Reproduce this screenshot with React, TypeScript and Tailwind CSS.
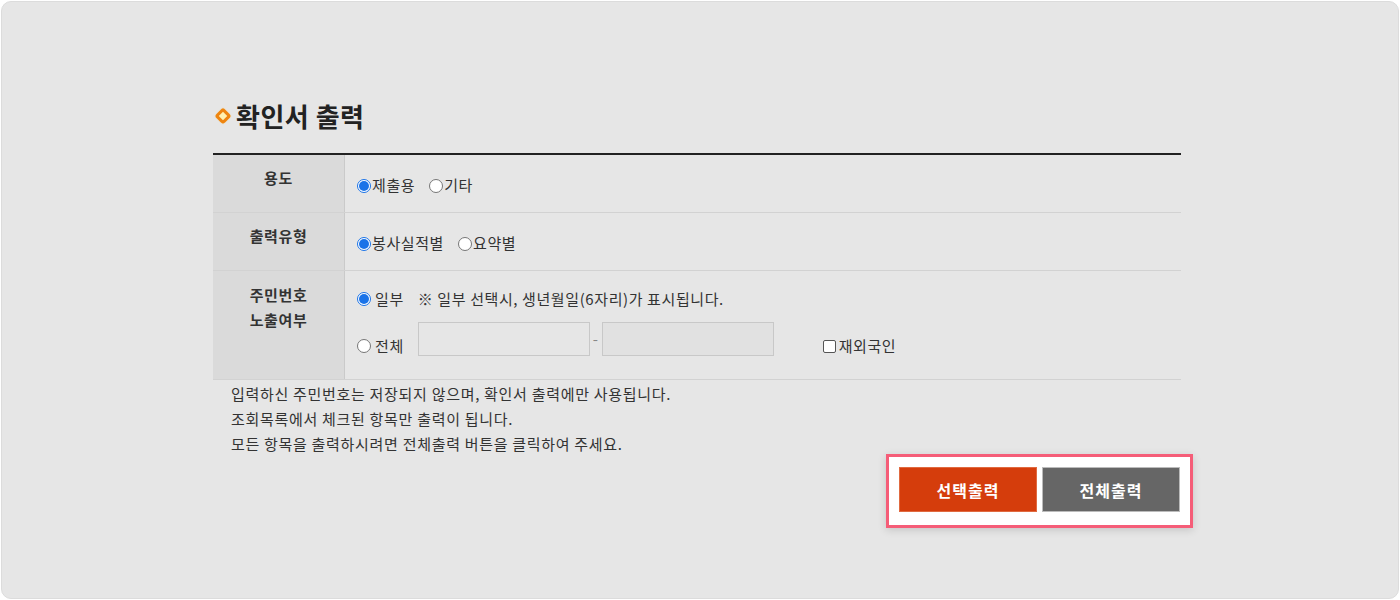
import React from 'react'

const font = { fontFamily: '"Noto Sans CJK KR", "Noto Sans", sans-serif' }

function Radio({ checked }: { checked?: boolean }) {
  return checked ? (
    <span className="inline-flex h-[14px] w-[14px] shrink-0 items-center justify-center rounded-full border border-[#1a73e8] bg-white">
      <span className="h-[10px] w-[10px] rounded-full bg-[#1a73e8]" />
    </span>
  ) : (
    <span className="inline-block h-[14px] w-[14px] shrink-0 rounded-full border border-[#767676] bg-white" />
  )
}

export default function App() {
  return (
    <div className="h-[600px] w-[1400px] bg-white p-px" style={font}>
      <div className="h-full w-full rounded-[10px] border border-[#dcdcdc] bg-[#e6e6e6] pl-[211px] pr-[217px] pt-[95px]">
        <h2 className="flex items-center gap-[7px] text-[26px] font-bold leading-[38px] tracking-[0.5px] text-[#222]">
          <span className="ml-[4px] inline-block h-[12px] w-[12px] rotate-45 rounded-[3px] border-[3px] border-[#ee8410] bg-[#fff0b0] shadow-[0_0_1px_#f5a623]" />
          확인서 출력
        </h2>

        <div className="mt-[18px] border-t-2 border-[#222] text-[15px] tracking-[0.6px] text-[#333]">
          <div className="flex h-[58px] border-b border-[#d2d2d2]">
            <div className="w-[132px] border-r border-[#cacaca] bg-[#dadada] pt-[12px] text-center font-bold">용도</div>
            <div className="flex items-center gap-[14px] pl-[12px] pt-[4px]">
              <label className="flex items-center gap-[1px]"><Radio checked />제출용</label>
              <label className="flex items-center gap-[1px]"><Radio />기타</label>
            </div>
          </div>
          <div className="flex h-[58px] border-b border-[#d2d2d2]">
            <div className="w-[132px] border-r border-[#cacaca] bg-[#dadada] pt-[12px] text-center font-bold">출력유형</div>
            <div className="flex items-center gap-[14px] pl-[12px] pt-[4px]">
              <label className="flex items-center gap-[1px]"><Radio checked />봉사실적별</label>
              <label className="flex items-center gap-[1px]"><Radio />요약별</label>
            </div>
          </div>
          <div className="flex h-[109px] border-b border-[#d2d2d2]">
            <div className="w-[132px] border-r border-[#cacaca] bg-[#dadada] pt-[11px] text-center font-bold leading-[25px]">
              주민번호<br />노출여부
            </div>
            <div className="flex flex-col pl-[12px] pt-[18px]">
              <div className="flex items-center gap-[4px] leading-[20px]">
                <Radio checked />
                <span>일부</span>
                <span className="ml-[10px]">※ 일부 선택시, 생년월일(6자리)가 표시됩니다.</span>
              </div>
              <div className="mt-[12px] flex items-center">
                <label className="mt-[14px] flex items-center gap-[4px]"><Radio />전체</label>
                <input className="ml-[14px] h-[34px] w-[172px] border border-[#c8c8c8] bg-[#e6e6e6]" />
                <span className="mx-[3px] text-[#888]">-</span>
                <input disabled className="h-[34px] w-[172px] border border-[#c8c8c8] bg-[#e1e1e1]" />
                <label className="ml-[49px] mt-[14px] flex items-center gap-[3px]">
                  <span className="inline-block h-[13px] w-[13px] rounded-[2px] border border-[#555] bg-white" />
                  재외국인
                </label>
              </div>
            </div>
          </div>
        </div>

        <div className="mt-[1px] pl-[18px] text-[15px] leading-[25px] tracking-[0.7px] text-[#333]">
          <p>입력하신 주민번호는 저장되지 않으며, 확인서 출력에만 사용됩니다.</p>
          <p>조회목록에서 체크된 항목만 출력이 됩니다.</p>
          <p>모든 항목을 출력하시려면 전체출력 버튼을 클릭하여 주세요.</p>
        </div>

        <div className="-mt-[2px] flex justify-end">
          <div className="-mr-[12px] flex gap-[5px] border-[3px] border-[#f55d78] bg-white px-[10px] pb-[13px] pt-[10px] shadow-[0_2px_8px_rgba(0,0,0,0.15)]">
            <button className="h-[45px] w-[138px] border border-[#e06a40] bg-[#d53d0c] text-[16px] font-bold tracking-[1px] text-white">선택출력</button>
            <button className="h-[45px] w-[138px] border border-[#bbb] bg-[#666666] text-[16px] font-bold tracking-[1px] text-white">전체출력</button>
          </div>
        </div>
      </div>
    </div>
  )
}
